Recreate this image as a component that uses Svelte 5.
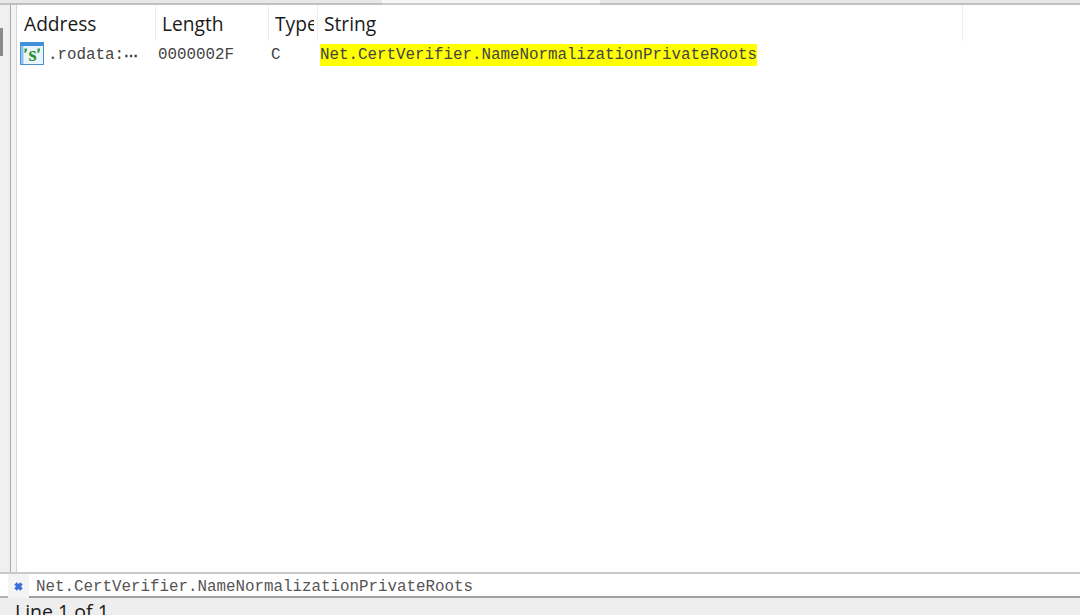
<script lang="ts">
    const columns = [
        { label: 'Address', width: 139 },
        { label: 'Length', width: 113 },
        { label: 'Type', width: 49 },
        { label: 'String', width: 645 },
    ];
    const value = 'Net.CertVerifier.NameNormalizationPrivateRoots';
</script>

<div class="window">
    <div class="top-strip">
        <span class="seg a"></span>
        <span class="seg b"></span>
        <span class="seg c"></span>
    </div>

    <div class="main">
        <div class="gutter"><span class="thumb"></span></div>
        <div class="inner-edge"></div>
        <div class="table">
            <div class="head">
                {#each columns as c}
                    <div class="th" style="width:{c.width}px"><span>{c.label}</span></div>
                {/each}
            </div>
            <div class="row">
                <div class="cell addr" style="width:139px">
                    <svg class="seg-icon" width="24" height="23" viewBox="0 0 24 23">
                        <rect x="0.5" y="0.5" width="23" height="22" fill="#eaf5fb" stroke="#4a90d0"/>
                        <rect x="1" y="1" width="22" height="3" fill="#3f8fdc"/>
                        <rect x="1" y="4" width="2.5" height="18" fill="#8cc4ee"/>
                        <text x="12.5" y="19" text-anchor="middle" class="s">s</text>
                        <path d="M4.5 6.5 h2.5 v2 l-1.5 2.5 h-1z M17.5 6.5 h2.5 v2 l-1.5 2.5 h-1z" fill="#3d9a3d"/>
                    </svg>
                    <span class="mono">.rodata:</span><span class="dots">⋯</span>
                </div>
                <div class="cell mono" style="width:113px">0000002F</div>
                <div class="cell mono" style="width:49px">C</div>
                <div class="cell"><mark class="mono">{value}</mark></div>
            </div>
        </div>
    </div>

    <div class="search">
        <div class="search-stub"></div>
        <div class="search-left">
            <svg width="11" height="11" viewBox="0 0 11 11">
                <path d="M2.5 2.5 L8.5 8.5 M8.5 2.5 L2.5 8.5" stroke="#3a6fe0" stroke-width="3.4"/>
            </svg>
        </div>
        <div class="search-input mono">{value}</div>
    </div>

    <div class="status">Line 1 of 1</div>
</div>

<style>
    :global(body) { margin: 0; background: #fff; }

    .window {
        width: 1080px; height: 615px; overflow: hidden;
        display: flex; flex-direction: column;
        font-family: "Open Sans", "Noto Sans", sans-serif; color: #1a1a1a;
    }
    .mono { font-family: "Liberation Mono", monospace; font-size: 15.83px; color: #444; }

    .top-strip { height: 5px; flex: none; display: flex; }
    .seg { display: block; height: 3px; border-bottom: 2px solid #bfbfc4; }
    .seg.a { width: 382px; background: #e8e8e8; }
    .seg.b { width: 218px; background: #f6f6f6; border-bottom-color: #cbcbd0; }
    .seg.c { flex: 1; background: #e6e6e6; }

    .main { flex: 1; display: flex; min-height: 0; }
    .gutter { width: 10px; background: #f0f0f0; flex: none; padding-top: 23px; box-sizing: border-box; }
    .thumb { display: block; width: 3px; height: 28px; background: #8a8a8a; }
    .inner-edge {
        width: 7px; flex: none; box-sizing: border-box; background: #f4f4f4;
        border-left: 1px solid #a8a8a8; border-right: 1px solid #d4d4d4;
    }
    .table { flex: 1; background: #fff; }

    .head { display: flex; height: 36px; }
    .th {
        box-sizing: border-box; flex: none; height: 36px; padding: 5px 3px 0 6px;
        border-right: 1px solid #ececec; font-size: 19.2px; line-height: 27px;
        white-space: nowrap;
    }
    .th:first-child { padding-left: 7px; }
    .th span { display: block; overflow: hidden; }
    .row { display: flex; align-items: center; height: 28px; }
    .cell { flex: none; box-sizing: border-box; padding-left: 2px; white-space: nowrap; display: flex; align-items: center; }
    .addr { gap: 4px; padding-left: 3px; }
    .seg-icon { flex: none; margin-top: -3px; }
    .s { font: bold 21px "Liberation Serif", serif; fill: #2f8f2f; }
    .dots { margin-left: -4px; font-size: 14px; font-weight: 700; color: #333; letter-spacing: -1px; }
    mark { background: #ffff00; color: #444; height: 22px; line-height: 22px; display: block; }

    .search {
        flex: none; height: 26px; display: flex; box-sizing: border-box;
        border-top: 2px solid #c8c8cc;
    }
    .search-stub { width: 8px; flex: none; background: #fff; border-bottom: 2px solid #b0b0b0; box-sizing: border-box; }
    .search-left {
        width: 21px; flex: none; display: flex; align-items: center; justify-content: center;
        box-sizing: border-box; background: #f4f4f4;
    }
    .search-input {
        flex: 1; padding-left: 7px; line-height: 26px; background: #fff;
        border-bottom: 2px solid #a0a0a0; box-sizing: border-box; color: #555;
    }
    .status {
        flex: none; height: 17px; background: #eeeeee; padding-left: 15px;
        font-size: 19.5px; line-height: 27px; overflow: hidden;
    }
</style>
